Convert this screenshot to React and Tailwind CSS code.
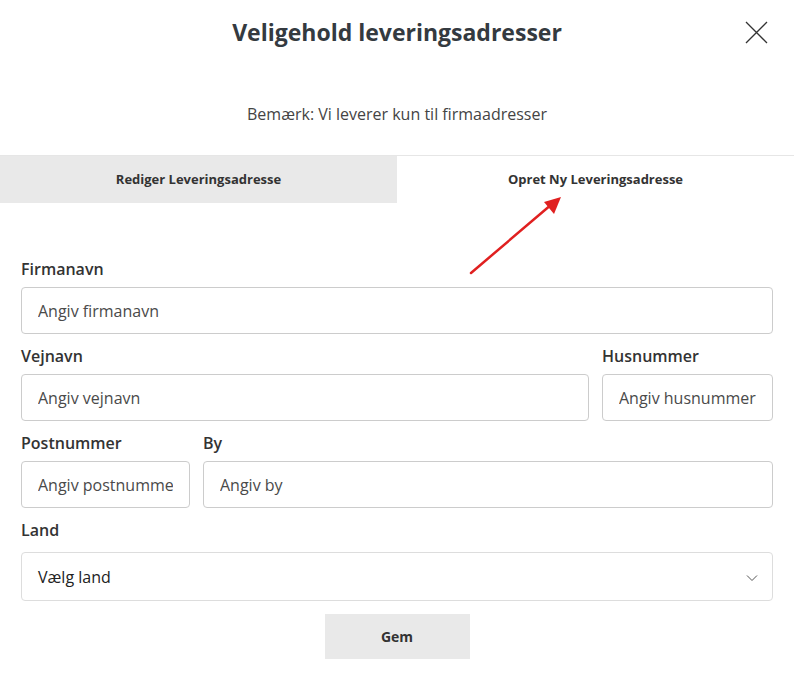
import { useState } from "react";

const Field = ({ label, placeholder, className }) => (
  <div className={className}>
    <label className="block text-[16px] leading-[24px] font-semibold text-[#333] mb-[6px]">{label}</label>
    <input
      placeholder={placeholder}
      className="w-full h-[47px] border border-[#ccc] rounded-[4px] px-[16px] text-[16px] text-[#333] placeholder:text-[#4a4a4a] outline-none"
    />
  </div>
);

const App = () => {
  const [tab, setTab] = useState("new");

  return (
    <div className="relative w-[794px] h-[674px] bg-white overflow-hidden" style={{ fontFamily: "'Open Sans', sans-serif" }}>
      {/* Header */}
      <div className="relative h-[64px] flex items-center justify-center">
        <h1 className="text-[23px] font-bold text-[#343a40]">Veligehold leveringsadresser</h1>
        <button className="absolute right-[26px] top-[21px] w-[23px] h-[23px]">
          <svg viewBox="0 0 23 23" className="w-full h-full" fill="none" stroke="#333" strokeWidth="1.3">
            <path d="M1 1L22 22M22 1L1 22" />
          </svg>
        </button>
      </div>

      <p className="text-center text-[16px] text-[#444] mt-[38px] leading-[24px]">Bemærk: Vi leverer kun til firmaadresser</p>

      {/* Tabs */}
      <div className="mt-[29px] flex border-t border-[#e6e6e6]">
        <button
          onClick={() => setTab("edit")}
          className={`w-[397px] h-[47px] text-[13px] font-bold text-[#333] ${tab === "edit" ? "bg-white" : "bg-[#e9e9e9]"}`}
        >
          Rediger Leveringsadresse
        </button>
        <button
          onClick={() => setTab("new")}
          className={`flex-1 h-[47px] text-[13px] font-bold text-[#333] ${tab === "new" ? "bg-white" : "bg-[#e9e9e9]"}`}
        >
          Opret Ny Leveringsadresse
        </button>
      </div>

      {/* Annotation arrow */}
      <svg className="absolute left-[466px] top-[192px]" width="100" height="86" viewBox="0 0 100 86">
        <path d="M5 81L86 12" stroke="#e02020" strokeWidth="2.5" strokeLinecap="round" />
        <path d="M95 5L78 10L88 22Z" fill="#e02020" />
      </svg>

      {/* Form */}
      <div className="px-[21px] pt-[54px]">
        <Field label="Firmanavn" placeholder="Angiv firmanavn" />
        <div className="flex gap-[13px] mt-[10px]">
          <Field label="Vejnavn" placeholder="Angiv vejnavn" className="w-[568px]" />
          <Field label="Husnummer" placeholder="Angiv husnummer" className="flex-1" />
        </div>
        <div className="flex gap-[13px] mt-[10px]">
          <Field label="Postnummer" placeholder="Angiv postnummer" className="w-[169px]" />
          <Field label="By" placeholder="Angiv by" className="flex-1" />
        </div>
        <div className="mt-[10px]">
          <label className="block text-[16px] leading-[24px] font-semibold text-[#333] mb-[10px]">Land</label>
          <div className="relative h-[49px] border border-[#ddd] rounded-[4px] flex items-center px-[16px]">
            <span className="text-[16px] text-[#222]">Vælg land</span>
            <svg className="absolute right-[14px] top-[21px]" width="12" height="8" viewBox="0 0 12 8" fill="none" stroke="#555" strokeWidth="1">
              <path d="M1 1.5L6 6.5L11 1.5" />
            </svg>
          </div>
        </div>
        <div className="flex justify-center mt-[13px]">
          <button className="w-[145px] h-[45px] bg-[#e9e9e9] text-[14px] font-bold text-[#333]">Gem</button>
        </div>
      </div>
    </div>
  );
};

export default App;
